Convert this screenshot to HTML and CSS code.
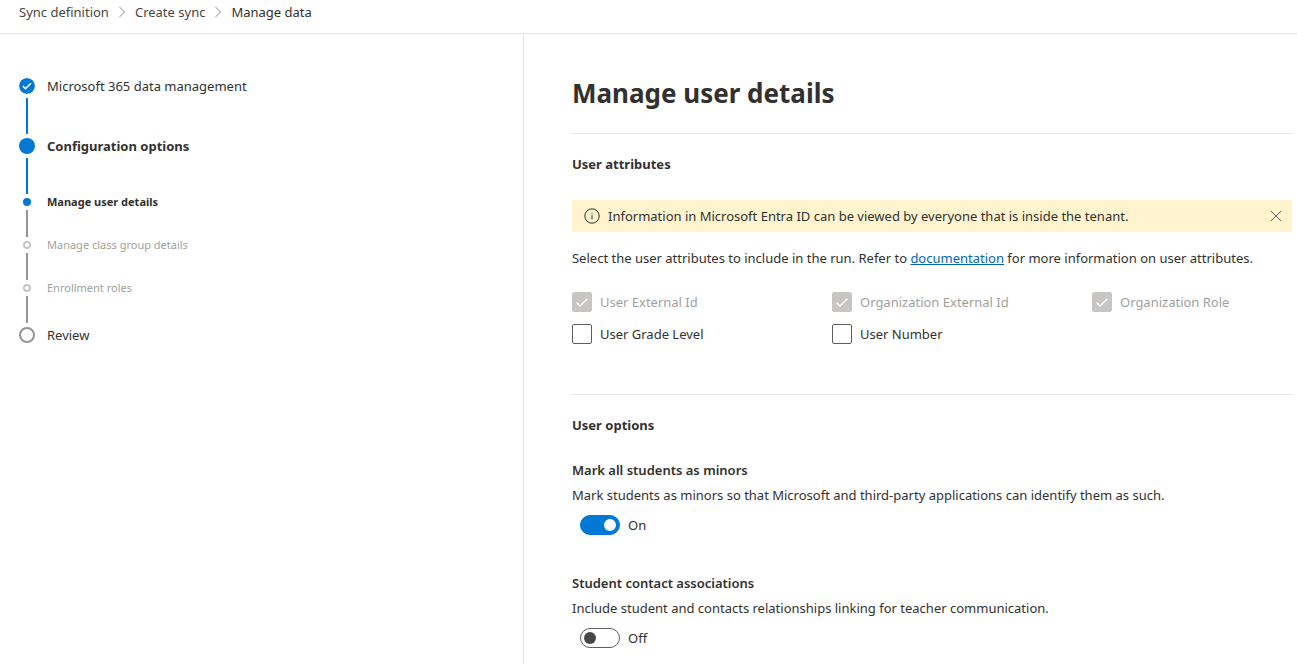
FILE: index.html
```html
<!DOCTYPE html>
<html lang="en">
<head>
<meta charset="utf-8">
<title>Manage data</title>
<link rel="stylesheet" href="styles.css">
</head>
<body>
<header class="topbar">
  <nav aria-label="Breadcrumb">
    <ol class="crumbs">
      <li><a href="#sync">Sync definition</a></li>
      <li><svg class="crumb-sep" viewBox="0 0 8 12" aria-hidden="true"><path d="M1.5 1l5 5-5 5"/></svg><a href="#create">Create sync</a></li>
      <li><svg class="crumb-sep" viewBox="0 0 8 12" aria-hidden="true"><path d="M1.5 1l5 5-5 5"/></svg><a class="current" href="#manage" aria-current="page">Manage data</a></li>
    </ol>
  </nav>
</header>
<div class="layout">
  <aside class="sidebar">
    <ol class="steps">
      <li class="step major done">
        <span class="track"><svg class="dot" viewBox="0 0 16 16" aria-hidden="true"><circle cx="8" cy="8" r="8" fill="#0078d4"/><path d="M3.8 8l2.6 2.6 5.6-5.4" fill="none" stroke="#fff" stroke-width="1.5"/></svg><span class="line"></span></span>
        <span class="label">Microsoft 365 data management</span>
      </li>
      <li class="step major active">
        <span class="track"><span class="dot"></span><span class="line"></span></span>
        <span class="label">Configuration options</span>
      </li>
      <li class="step minor active">
        <span class="track"><span class="dot"></span><span class="line"></span></span>
        <span class="label">Manage user details</span>
      </li>
      <li class="step minor pending">
        <span class="track"><span class="dot"></span><span class="line"></span></span>
        <span class="label">Manage class group details</span>
      </li>
      <li class="step minor pending before-major">
        <span class="track"><span class="dot"></span><span class="line"></span></span>
        <span class="label">Enrollment roles</span>
      </li>
      <li class="step major todo">
        <span class="track"><span class="dot"></span></span>
        <span class="label">Review</span>
      </li>
    </ol>
  </aside>
  <main class="content">
    <h1>Manage user details</h1>
    <section class="attributes">
      <h2>User attributes</h2>
      <div class="notice" role="status">
        <svg class="info" viewBox="0 0 16 16" aria-hidden="true"><circle cx="8" cy="8" r="7.2" fill="none" stroke="#323130"/><path d="M8 7v4.5M8 4.5v1.2" stroke="#323130" fill="none"/></svg>
        <span class="notice-text">Information in Microsoft Entra ID can be viewed by everyone that is inside the tenant.</span>
        <button class="close" type="button" aria-label="Close"><svg viewBox="0 0 10 10" aria-hidden="true"><path d="M0 0l10 10M10 0L0 10"/></svg></button>
      </div>
      <p>Select the user attributes to include in the run. Refer to <a href="#docs">documentation</a> for more information on user attributes.</p>
      <div class="checks">
        <label class="check"><input type="checkbox" checked disabled><svg class="tick" viewBox="0 0 20 20" aria-hidden="true"><path d="M4.5 10.5l3.5 3.5 7.5-7.5"/></svg>User External Id</label>
        <label class="check"><input type="checkbox" checked disabled><svg class="tick" viewBox="0 0 20 20" aria-hidden="true"><path d="M4.5 10.5l3.5 3.5 7.5-7.5"/></svg>Organization External Id</label>
        <label class="check"><input type="checkbox" checked disabled><svg class="tick" viewBox="0 0 20 20" aria-hidden="true"><path d="M4.5 10.5l3.5 3.5 7.5-7.5"/></svg>Organization Role</label>
        <label class="check"><input type="checkbox">User Grade Level</label>
        <label class="check"><input type="checkbox">User Number</label>
      </div>
    </section>
    <section class="options">
      <h2>User options</h2>
      <div class="option">
        <h3>Mark all students as minors</h3>
        <p>Mark students as minors so that Microsoft and third-party applications can identify them as such.</p>
        <label class="toggle"><input type="checkbox" role="switch" checked>On</label>
      </div>
      <div class="option">
        <h3>Student contact associations</h3>
        <p>Include student and contacts relationships linking for teacher communication.</p>
        <label class="toggle"><input type="checkbox" role="switch">Off</label>
      </div>
    </section>
  </main>
</div>
</body>
</html>
```
FILE: styles.css
```css
* { box-sizing: border-box; }
html, body { height: 100%; }
body {
  margin: 0;
  display: flex;
  flex-direction: column;
  background: #fff;
  color: #323130;
  font: 13px/20px "Segoe UI", "Noto Sans", "Open Sans", sans-serif;
}
h1, h2, h3, p, ol { margin: 0; padding: 0; }
ol { list-style: none; }

.topbar { flex: none; padding: 2px 19px 11px; border-bottom: 1px solid #e5e5e5; }
.crumbs { display: flex; }
.crumbs li { display: flex; align-items: center; }
.crumbs a { color: #484644; text-decoration: none; }
.crumbs .current { color: #323130; }
.crumb-sep { width: 8px; height: 12px; margin: 0 9px; fill: none; stroke: #8a8886; }

.layout { flex: 1; min-height: 0; display: flex; }
.sidebar { flex: none; width: 40.4%; padding: 44px 19px; border-right: 1px solid #e5e5e5; }
.content { flex: 1; min-width: 0; padding: 40px 5px 0 48px; }

.step { display: flex; gap: 12px; line-height: 16px; }
.track { display: flex; flex-direction: column; align-items: center; width: 16px; }
.dot { flex: none; width: 16px; height: 16px; border-radius: 50%; }
.line { width: 2px; height: 36px; background: #0078d4; }
.major .line { margin-top: 4px; }
.major.done .line { margin-bottom: 4px; }
.major.active .label { font-weight: 700; }
.active .dot { background: #0078d4; }
.todo .dot { border: 2px solid #979593; }
.minor { font-size: 11px; }
.minor .dot { width: 8px; height: 8px; margin: 4px 0; }
.minor .line { height: 27px; background: #979593; }
.minor.active .label { font-weight: 700; }
.minor.pending .label { color: #a19f9d; }
.minor.pending .dot { border: 2px solid #c8c6c4; }
.before-major .line { margin-bottom: 4px; }

h1 { font-size: 26px; line-height: 38px; font-weight: 700; }
h2 { font-size: 13px; font-weight: 700; }
h3 { font-size: 13px; font-weight: 600; }
section { border-top: 1px solid #e5e5e5; padding-top: 20px; }
.attributes { margin-top: 21px; padding-bottom: 50px; }

.notice { display: flex; align-items: center; min-height: 32px; margin: 26px 0 16px; padding-left: 12px; background: #fff4ce; }
.info { flex: none; width: 16px; height: 16px; margin-right: 8px; }
.notice-text { flex: 1; }
.close { display: flex; align-items: center; justify-content: center; width: 32px; height: 32px; padding: 0; border: 0; background: none; }
.close svg { width: 10px; height: 10px; fill: none; stroke: #605e5c; }
p a { color: #0067b8; text-decoration: underline; }

.checks { display: grid; grid-template-columns: 260px 260px 1fr; row-gap: 12px; margin-top: 24px; }
.check { display: flex; align-items: center; gap: 8px; }
.check input { appearance: none; flex: none; width: 20px; height: 20px; margin: 0; border: 1px solid #605e5c; border-radius: 2px; }
.check input:disabled { background: #c8c6c4; border-color: #c8c6c4; }
.check:has(:disabled) { color: #a19f9d; }
.tick { width: 20px; height: 20px; margin-left: -28px; fill: none; stroke: #fff; stroke-width: 1.3; }

.option { margin-top: 25px; }
.option p { margin-top: 5px; }
.option + .option { margin-top: 38px; }
.toggle { display: flex; align-items: center; gap: 8px; margin: 10px 0 0 8px; }
.toggle input { appearance: none; display: flex; align-items: center; width: 40px; height: 20px; margin: 0; padding: 0 3px; border: 1px solid #605e5c; border-radius: 10px; }
.toggle input::before { content: ""; width: 12px; height: 12px; border-radius: 50%; background: #484644; }
.toggle input:checked { justify-content: flex-end; background: #0078d4; border-color: #0078d4; }
.toggle input:checked::before { background: #fff; }
```
